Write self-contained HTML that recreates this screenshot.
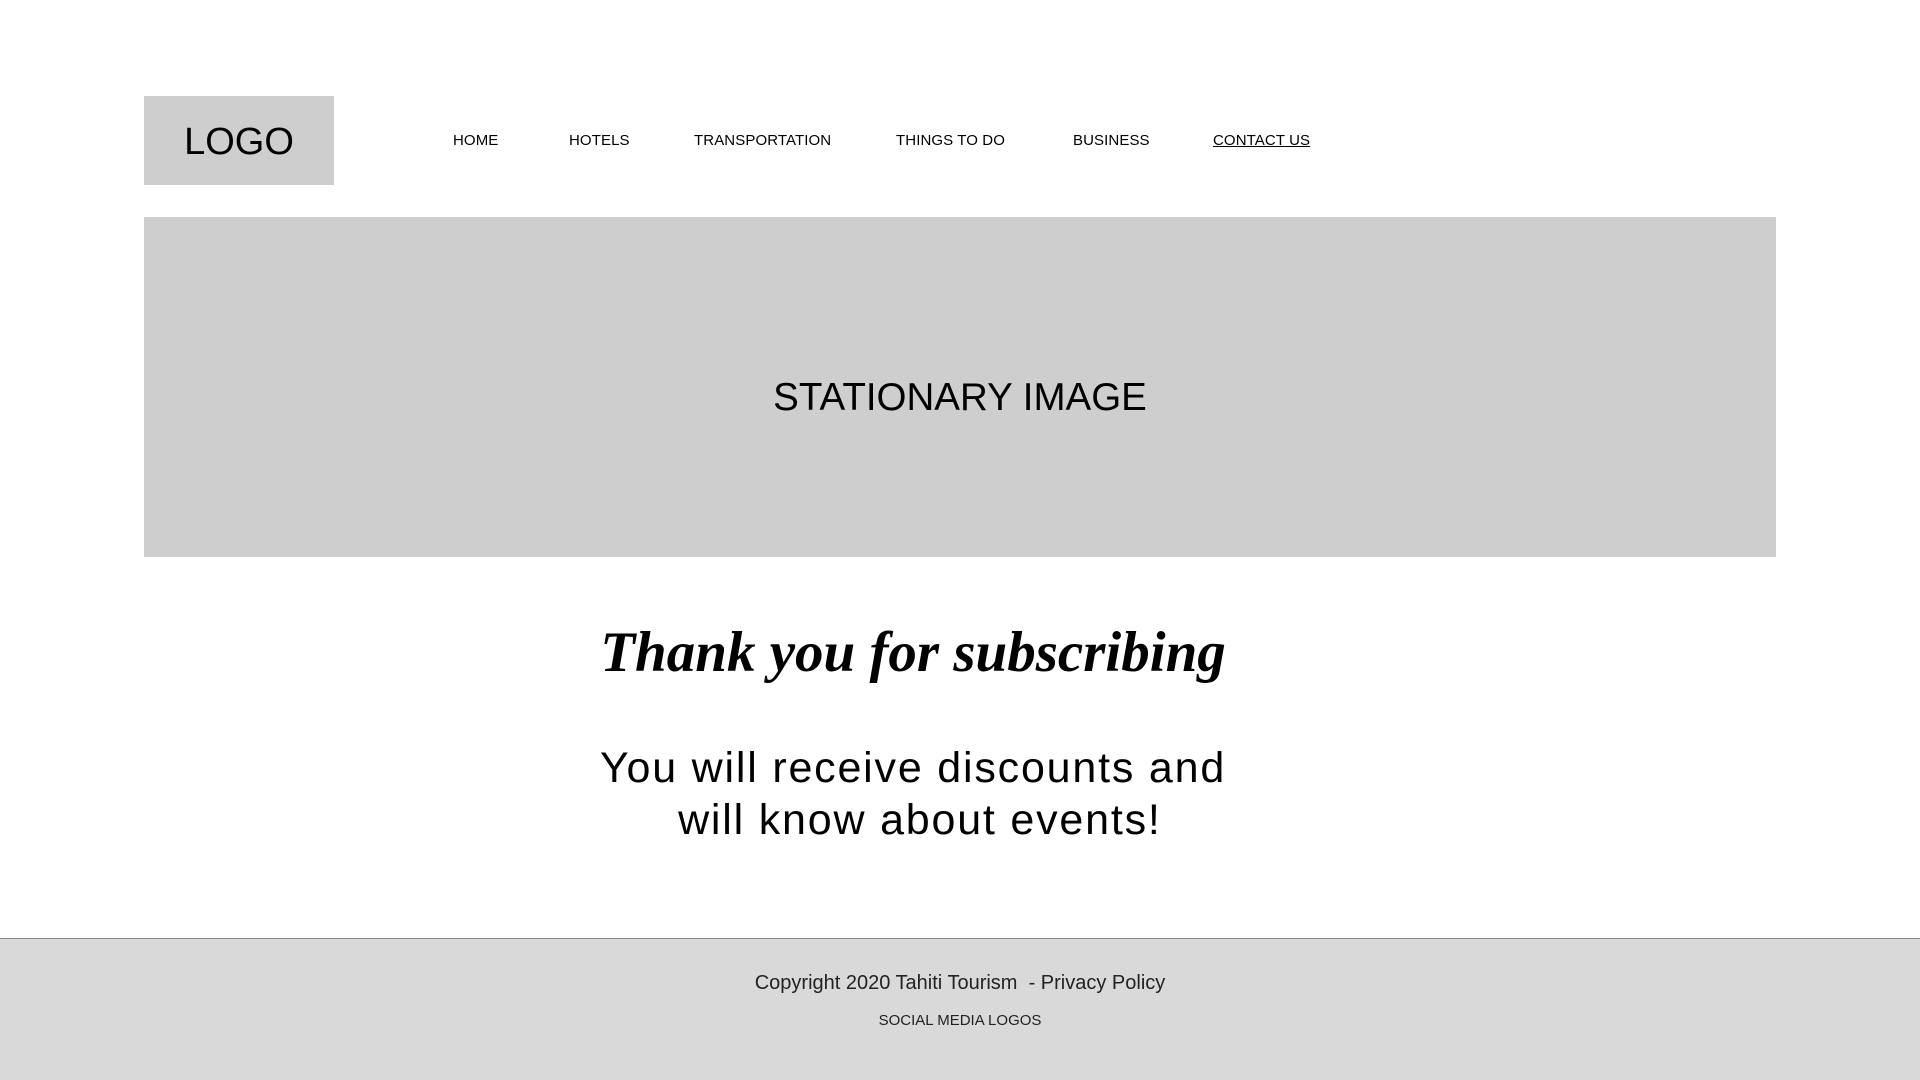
<!DOCTYPE html>
<html><head><meta charset="utf-8"><style>
*{margin:0;padding:0;box-sizing:border-box}
body{width:1920px;height:1080px;background:#fff;position:relative;overflow:hidden;font-family:"Liberation Sans","DejaVu Sans",sans-serif;color:#000}
.abs{position:absolute}
#logo{left:144px;top:96px;width:190px;height:89px;background:#cecece;display:flex;align-items:center;justify-content:center;font-size:38px;padding-top:3px}
.nav{top:132px;font-size:15px;letter-spacing:0.1px}
#hero{left:144px;top:217px;width:1632px;height:340px;background:#cecece;display:flex;align-items:center;justify-content:center;font-size:38.5px;padding-top:22px}
#thanks{left:0;width:1826px;top:620px;text-align:center;font-family:"Liberation Serif",serif;font-style:italic;font-weight:bold;font-size:57px}
#msg{left:0;width:1826px;top:742px;text-align:center;font-size:43px;line-height:52px;letter-spacing:1.8px}
#foot{left:0;top:938px;width:1920px;height:142px;background:#d9d9d9;border-top:1px solid #8a8a8a}
#copy{left:0;width:1920px;top:972px;text-align:center;font-size:20px;color:#222}
#soc{left:0;width:1920px;top:1012px;text-align:center;font-size:15px;color:#222}
</style></head><body>
<div id="logo" class="abs">LOGO</div>
<div class="abs nav" style="left:453px">HOME</div>
<div class="abs nav" style="left:569px">HOTELS</div>
<div class="abs nav" style="left:694px">TRANSPORTATION</div>
<div class="abs nav" style="left:896px">THINGS TO DO</div>
<div class="abs nav" style="left:1073px">BUSINESS</div>
<div class="abs nav" style="left:1213px;text-decoration:underline">CONTACT US</div>
<div id="hero" class="abs">STATIONARY IMAGE</div>
<div id="thanks" class="abs">Thank you for subscribing</div>
<div id="msg" class="abs">You will receive discounts and<br>&nbsp;will know about events!</div>
<div id="foot" class="abs"></div>
<div id="copy" class="abs">Copyright 2020 Tahiti Tourism &nbsp;- Privacy Policy</div>
<div id="soc" class="abs">SOCIAL MEDIA LOGOS</div>
</body></html>
